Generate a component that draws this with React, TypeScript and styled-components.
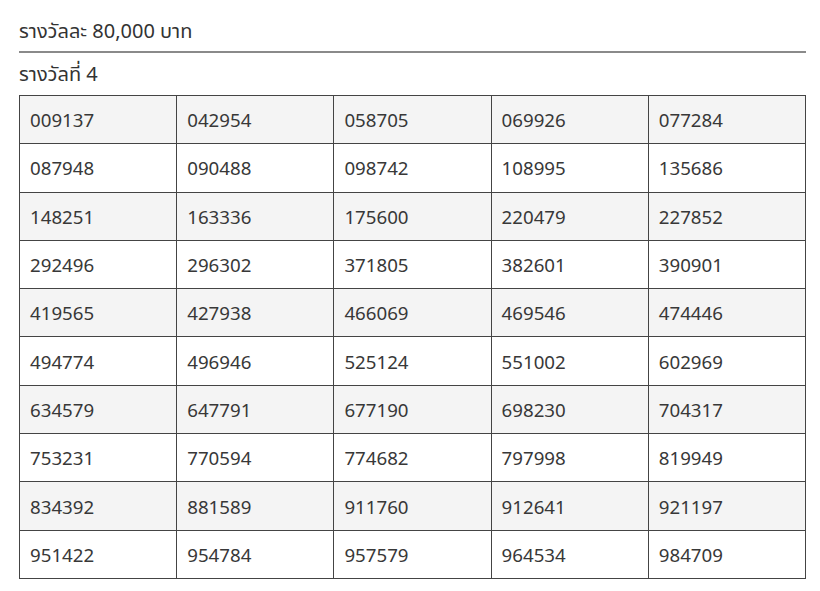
import styled, { createGlobalStyle } from "styled-components";

const GlobalStyle = createGlobalStyle`
  body {
    margin: 0;
    background: #ffffff;
    font-family: "Noto Sans", "Noto Sans Thai", "Open Sans", sans-serif;
    color: #333333;
  }
`;

const numbers = [
  "009137", "042954", "058705", "069926", "077284",
  "087948", "090488", "098742", "108995", "135686",
  "148251", "163336", "175600", "220479", "227852",
  "292496", "296302", "371805", "382601", "390901",
  "419565", "427938", "466069", "469546", "474446",
  "494774", "496946", "525124", "551002", "602969",
  "634579", "647791", "677190", "698230", "704317",
  "753231", "770594", "774682", "797998", "819949",
  "834392", "881589", "911760", "912641", "921197",
  "951422", "954784", "957579", "964534", "984709",
];

const rows: string[][] = [];
for (let i = 0; i < numbers.length; i += 5) {
  rows.push(numbers.slice(i, i + 5));
}

const App = () => {
  return (
    <Page>
      <GlobalStyle />
      <Title>รางวัลละ 80,000 บาท</Title>
      <SubTitle>รางวัลที่ 4</SubTitle>
      <Table>
        <tbody>
          {rows.map((row, i) => (
            <Row key={i} shaded={i % 2 === 0}>
              {row.map((n) => (
                <Cell key={n}>{n}</Cell>
              ))}
            </Row>
          ))}
        </tbody>
      </Table>
    </Page>
  );
};

export default App;

const Page = styled.div`
  padding: 17px 14px 0 19px;
`;

const Title = styled.div`
  font-size: 20px;
  line-height: 28px;
  padding-bottom: 6px;
  border-bottom: 2px solid #8a8a8a;
  color: #333333;
`;

const SubTitle = styled.div`
  font-size: 20px;
  line-height: 28px;
  padding: 7px 0 7px;
  color: #333333;
`;

const Table = styled.table`
  width: 787px;
  border-collapse: collapse;
  table-layout: fixed;
  border: 1px solid #555555;
`;

const Row = styled.tr<{ shaded: boolean }>`
  background: ${({ shaded }) => (shaded ? "#f4f4f4" : "#ffffff")};
`;

const Cell = styled.td`
  border: 1px solid #444444;
  height: 48.3px;
  padding: 0 10px;
  font-size: 18.7px;
  color: #383838;
  box-sizing: border-box;
`;
